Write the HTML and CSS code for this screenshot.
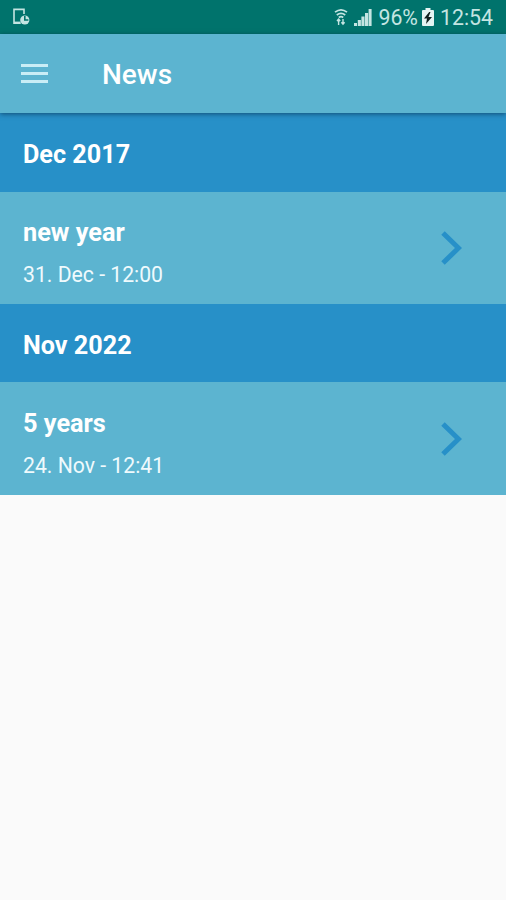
FILE: index.html
```html
<!DOCTYPE html>
<html lang="en">
<head>
<meta charset="utf-8">
<title>News</title>
<link rel="stylesheet" href="styles.css">
</head>
<body>
<div class="status">
  <svg class="device" width="17" height="18" viewBox="0 0 17 18" fill="none" stroke="currentColor" stroke-width="1.6">
    <path d="M7.5 15.2H1V1.4h10V6"/>
    <path d="M1 14.8h6.5" stroke-width="2.4"/>
    <circle cx="11.8" cy="12" r="4.6" fill="currentColor" stroke="none"/>
    <path class="hand" d="M11.8 8v4h3.6"/>
  </svg>
  <div class="status-right">
    <svg class="wifi" width="14" height="18" viewBox="0 0 14 18" fill="none" stroke="currentColor" stroke-width="1.7">
      <path d="M1 4.2q6-4.8 12 0M2.8 7q4.2-3.4 8.4 0M4.8 9.5q2.2-1.8 4.4 0"/>
      <path d="M4.6 17v-6M9 11v5M7.4 14.2l1.6 2 1.6-2M3 13l1.6-2 1.6 2" stroke-width="1.4"/>
    </svg>
    <svg class="signal" width="18" height="17" viewBox="0 0 18 17" fill="currentColor">
      <path d="M0 14h3v3H0zM3.8 11h3.1v6H3.8zM7.4 7.5h3.1V17H7.4zM11 4h3.1v13H11zM14.6 0h3v17h-3z"/>
    </svg>
    <span class="percent">96%</span>
    <svg class="battery" width="12" height="18" viewBox="0 0 12 18">
      <path fill="currentColor" d="M3.5 0h5v2H11q1 0 1 1v14q0 1-1 1H1q-1 0-1-1V3q0-1 1-1h2.5z"/>
      <path fill="#10211f" d="M7.2 4 2 10.5h3L4 16l6-7H6.5L8.5 4z"/>
    </svg>
    <span class="clock">12:54</span>
  </div>
</div>
<header class="appbar">
  <svg class="menu" width="27" height="19" viewBox="0 0 27 19" fill="currentColor">
    <path d="M0 0h27v3H0zM0 8h27v3H0zM0 16h27v3H0z"/>
  </svg>
  <h1 class="title">News</h1>
</header>
<main>
  <h2 class="month first">Dec 2017</h2>
  <div class="item">
    <div class="text">
      <div class="name">new year</div>
      <div class="date">31. Dec - 12:00</div>
    </div>
    <svg class="chevron" width="21" height="34" viewBox="0 0 21 34"><path d="M2 2l15.5 15L2 32"/></svg>
  </div>
  <h2 class="month">Nov 2022</h2>
  <div class="item last">
    <div class="text">
      <div class="name">5 years</div>
      <div class="date">24. Nov - 12:41</div>
    </div>
    <svg class="chevron" width="21" height="34" viewBox="0 0 21 34"><path d="M2 2l15.5 15L2 32"/></svg>
  </div>
</main>
</body>
</html>
```
FILE: styles.css
```css
* { box-sizing: border-box; }
body {
  margin: 0;
  min-height: 900px;
  background: #fafafa;
  color: #fff;
  font-family: Roboto, "Liberation Sans", sans-serif;
}
svg { display: block; flex: none; }
.status {
  display: flex;
  justify-content: space-between;
  align-items: center;
  height: 34px;
  padding: 0 13px 0 13px;
  background: #00736c;
  color: #c4e5e2;
}
.hand { stroke: #00736c; }
.status-right {
  display: flex;
  align-items: center;
  font-size: 21.3px;
  line-height: 34px;
}
.signal { margin-left: 6px; }
.percent { margin-left: 6px; padding-top: 2px; }
.battery { margin: 0 6px 0 4px; color: #e4f5f3; }
.clock { padding-top: 2px; }
.appbar {
  position: relative;
  display: flex;
  align-items: center;
  height: 79px;
  padding: 2px 21px 0;
  background: #5cb4d0;
  box-shadow: 0 1px 5px rgba(0, 30, 60, .6);
}
.menu { color: #c9edf6; margin-bottom: 2px; }
.title {
  margin: 0 0 0 54px;
  font-size: 28px;
  font-weight: 500;
  line-height: 36px;
}
.month {
  height: 78px;
  margin: 0;
  padding: 3px 23px 0;
  background: #2790c8;
  font-size: 25.2px;
  font-weight: 700;
  line-height: 78px;
}
.month.first { height: 79px; }
.item {
  display: flex;
  justify-content: space-between;
  height: 112px;
  padding: 0 44px 0 23px;
  background: #5cb4d0;
}
.item.last { height: 113px; padding-top: 1px; }
.text { padding-top: 24px; }
.name {
  font-size: 25.3px;
  font-weight: 700;
  line-height: 34px;
}
.date {
  margin-top: 10px;
  font-size: 21.2px;
  line-height: 30px;
  color: #effafd;
}
.chevron {
  margin-top: 39px;
  fill: none;
  stroke: #2790c8;
  stroke-width: 5;
}
```
